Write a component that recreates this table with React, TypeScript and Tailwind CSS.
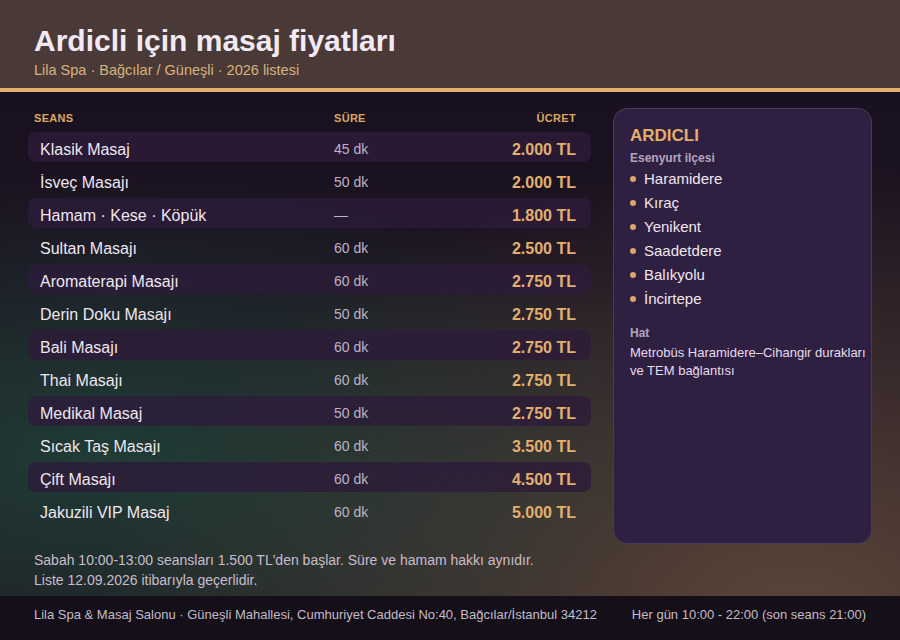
const services = [
  { name: "Klasik Masaj", time: "45 dk", price: "2.000 TL" },
  { name: "İsveç Masajı", time: "50 dk", price: "2.000 TL" },
  { name: "Hamam · Kese · Köpük", time: "—", price: "1.800 TL" },
  { name: "Sultan Masajı", time: "60 dk", price: "2.500 TL" },
  { name: "Aromaterapi Masajı", time: "60 dk", price: "2.750 TL" },
  { name: "Derin Doku Masajı", time: "50 dk", price: "2.750 TL" },
  { name: "Bali Masajı", time: "60 dk", price: "2.750 TL" },
  { name: "Thai Masajı", time: "60 dk", price: "2.750 TL" },
  { name: "Medikal Masaj", time: "50 dk", price: "2.750 TL" },
  { name: "Sıcak Taş Masajı", time: "60 dk", price: "3.500 TL" },
  { name: "Çift Masajı", time: "60 dk", price: "4.500 TL" },
  { name: "Jakuzili VIP Masaj", time: "60 dk", price: "5.000 TL" },
];

const areas = ["Haramidere", "Kıraç", "Yenikent", "Saadetdere", "Balıkyolu", "İncirtepe"];

export default function App() {
  return (
    <div className="w-[900px] h-[640px] flex flex-col overflow-hidden [font-family:'Liberation_Sans',Arial,sans-serif] bg-[#1a1120]">
      {/* başlık */}
      <header className="h-[88px] bg-[#4a3a37] px-[34px] pt-[24px]">
        <h1 className="text-[30px] leading-[34px] font-bold text-[#f3e9f3]">Ardicli için masaj fiyatları</h1>
        <p className="mt-[2px] text-[14.5px] leading-[20px] text-[#d9b27c]">Lila Spa · Bağcılar / Güneşli · 2026 listesi</p>
      </header>
      <div className="h-[4px] bg-[#e3ad6e]" />

      <main className="flex-1 flex flex-col px-7 pt-4 pb-[6px] bg-[radial-gradient(ellipse_at_12%_72%,rgba(34,92,70,0.55),transparent_55%),radial-gradient(ellipse_at_88%_105%,rgba(112,86,64,0.75),transparent_62%),linear-gradient(180deg,#1a1120_0%,#1f1722_100%)]">
        <div className="flex-1 flex gap-[22px]">
          {/* fiyat tablosu */}
          <section className="w-[563px]">
            <div className="h-6 pb-1 flex items-center pl-[6px] pr-[15px] text-[11px] font-bold tracking-[0.3px] text-[#d6a864]">
              <span className="w-[300px]">SEANS</span>
              <span className="flex-1">SÜRE</span>
              <span>ÜCRET</span>
            </div>
            <div className="flex flex-col gap-[3px]">
              {services.map((s, i) => (
                <div
                  key={s.name}
                  className={`h-[30px] flex items-center pt-[5px] pl-3 pr-[15px] rounded-lg ${i % 2 === 0 ? "bg-[#2d1b3a]/80" : ""}`}
                >
                  <span className="w-[294px] text-[16px] text-[#efe6ef]">{s.name}</span>
                  <span className="flex-1 text-[14px] text-[#bdb3c2]">{s.time}</span>
                  <span className="text-[16px] font-bold text-[#e2b06e]">{s.price}</span>
                </div>
              ))}
            </div>
          </section>

          {/* bölge kartı */}
          <aside className="w-[259px] rounded-[14px] border border-[#4a3a5c] bg-[#2f2041] pl-4 pr-0 pt-4">
            <h2 className="text-[17px] leading-[22px] font-bold text-[#e0ad6c]">ARDICLI</h2>
            <p className="mt-[3px] text-[12px] leading-4 font-bold text-[#b4a4bc]">Esenyurt ilçesi</p>
            <ul className="mt-[1px]">
              {areas.map((a) => (
                <li key={a} className="h-6 flex items-center gap-2 text-[15px] text-[#f0e6f0]">
                  <span className="w-[6px] h-[6px] rounded-full bg-[#d9a868]" />
                  {a}
                </li>
              ))}
            </ul>
            <p className="mt-[14px] text-[12px] leading-4 font-bold text-[#b4a4bc]">Hat</p>
            <p className="mt-[3px] text-[13px] leading-[18px] text-[#e6dcec]">
              Metrobüs Haramidere–Cihangir durakları ve TEM bağlantısı
            </p>
          </aside>
        </div>

        <div className="mt-[6px] px-[6px] text-[14px] leading-5 text-[#c9bccb]">
          <p>Sabah 10:00-13:00 seansları 1.500 TL'den başlar. Süre ve hamam hakkı aynıdır.</p>
          <p>Liste 12.09.2026 itibarıyla geçerlidir.</p>
        </div>
      </main>

      <footer className="h-[44px] bg-[#150f1a] px-[34px] pt-[10px] flex justify-between text-[13px] leading-[18px] text-[#c4bcc8]">
        <span>Lila Spa &amp; Masaj Salonu · Güneşli Mahallesi, Cumhuriyet Caddesi No:40, Bağcılar/İstanbul 34212</span>
        <span>Her gün 10:00 - 22:00 (son seans 21:00)</span>
      </footer>
    </div>
  );
}
